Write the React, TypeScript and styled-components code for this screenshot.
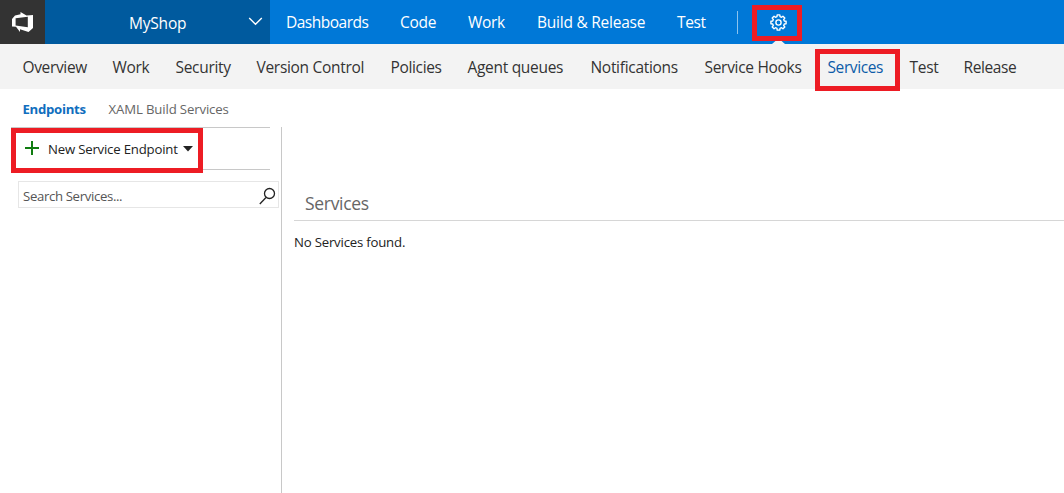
import React from 'react';
import styled, { createGlobalStyle } from 'styled-components';

const GlobalStyle = createGlobalStyle`
  *, *::before, *::after { box-sizing: border-box; }
  body {
    margin: 0;
    background: #fff;
    font-family: "Open Sans", "Noto Sans", sans-serif;
    color: #222;
    overflow: hidden;
  }
`;

const Page = styled.div`
  display: flex;
  flex-direction: column;
  height: 493px;
  width: 1064px;
`;

const TopBar = styled.header`
  display: flex;
  flex: none;
  height: 44px;
  background: #0078d7;
  color: #fff;
`;

const LogoTile = styled.div`
  width: 45px;
  background: #333;
  padding: 11px 0 0 11px;
`;

const ProjectPicker = styled.div`
  display: flex;
  width: 225px;
  padding-left: 84px;
  background: #005a9e;
  line-height: 46px;
`;

const Chevron = styled.svg`
  margin: 15px 7px 0 auto;
`;

const TopNav = styled.nav`
  display: flex;
  padding-left: 16px;
  line-height: 45px;
`;

const SubNav = styled.nav`
  display: flex;
  flex: none;
  height: 45px;
  padding-left: 22.5px;
  background: #f3f3f3;
  color: #333;
  line-height: 47px;
`;

const Label = styled.span<{ $width: number; $size?: number; $track?: number; $gap?: number }>`
  flex: none;
  width: ${p => p.$width}px;
  margin-right: ${p => p.$gap ?? 0}px;
  font-size: ${p => p.$size ?? 15.5}px;
  letter-spacing: ${p => p.$track ?? -0.3}px;
  white-space: nowrap;
`;

const Current = styled.span`
  position: relative;
  color: #0c5ba8;
`;

const Divider = styled.div`
  width: 1px;
  height: 23px;
  margin: 11px 14px 0 0;
  background: #8cc3ee;
`;

const SettingsTab = styled.div`
  position: relative;
  width: 50px;
  padding: 14px 0 0 18px;
  line-height: 0;
`;

const Pointer = styled.svg`
  position: absolute;
  left: 20px;
  top: 40px;
`;

const Highlight = styled.div<{ $top: number; $left: number; $width: number; $height: number; $border?: number }>`
  position: absolute;
  top: ${p => p.$top}px;
  left: ${p => p.$left}px;
  width: ${p => p.$width}px;
  height: ${p => p.$height}px;
  border: ${p => p.$border ?? 5}px solid #ed1c24;
`;

const Tabs = styled.div`
  display: flex;
  flex: none;
  height: 38px;
  padding-left: 22.5px;
  line-height: 41px;
  color: #666;
`;

const ActiveTab = styled.span`
  color: #106ebe;
  font-weight: 700;
`;

const Body = styled.div`
  display: flex;
  flex: 1;
`;

const SidePanel = styled.aside`
  width: 282px;
  padding-left: 11px;
  border-right: 1px solid #c8c8c8;
`;

const Toolbar = styled.div`
  position: relative;
  display: flex;
  width: 259px;
  height: 43px;
  border: solid #c8c8c8;
  border-width: 1px 0;
  padding-left: 14px;
  line-height: 43px;
`;

const PlusIcon = styled.svg`
  margin: 13px 9px 0 0;
`;

const CaretIcon = styled.svg`
  margin-top: 18px;
`;

const SearchBox = styled.div`
  display: flex;
  justify-content: space-between;
  width: 261px;
  height: 27px;
  margin: 11px 0 0 7px;
  padding: 0 2px 0 4px;
  border: 1px solid #e6e6e6;
  line-height: 28px;
  color: #555;
`;

const Main = styled.main`
  flex: 1;
  padding: 60px 0 0 12px;
`;

const Heading = styled.h2`
  display: flex;
  height: 34px;
  margin: 0;
  padding-left: 11px;
  border-bottom: 1px solid #d6d6d6;
  font-weight: 400;
  line-height: 32px;
  color: #666;
`;

const Message = styled.p`
  display: flex;
  margin: 0;
  line-height: 43px;
  color: #222;
`;

type Item = { text: string; width: number; gap: number; track?: number };

const topItems: Item[] = [
  { text: 'Dashboards', width: 83, gap: 31, track: -0.5 },
  { text: 'Code', width: 37, gap: 31 },
  { text: 'Work', width: 38, gap: 31 },
  { text: 'Build & Release', width: 109, gap: 31, track: -0.24 },
  { text: 'Test', width: 29, gap: 31, track: -0.4 },
];

const subItems: Item[] = [
  { text: 'Overview', width: 64, gap: 26, track: -0.35 },
  { text: 'Work', width: 37, gap: 26 },
  { text: 'Security', width: 55, gap: 26 },
  { text: 'Version Control', width: 108, gap: 26 },
  { text: 'Policies', width: 51, gap: 26, track: -0.35 },
  { text: 'Agent queues', width: 97, gap: 26 },
  { text: 'Notifications', width: 88, gap: 26 },
  { text: 'Service Hooks', width: 97, gap: 26 },
  { text: 'Services', width: 56, gap: 26, track: -0.4 },
  { text: 'Test', width: 28, gap: 26 },
  { text: 'Release', width: 52, gap: 0, track: -0.4 },
];

const gearPath = (() => {
  const points: string[] = [];
  for (let i = 0; i < 8; i++) {
    const a = (i * Math.PI) / 4;
    [[-0.26, 6], [-0.17, 7.7], [0.17, 7.7], [0.26, 6]].forEach(([d, r]) => {
      points.push(`${(8.5 + r * Math.cos(a + d)).toFixed(2)} ${(8.5 + r * Math.sin(a + d)).toFixed(2)}`);
    });
  }
  return `M${points.join('L')}Z`;
})();

export default function App() {
  return (
    <Page>
      <GlobalStyle />
      <TopBar>
        <LogoTile>
          <svg width="23" height="22" viewBox="0 0 23 22">
            <path fill="#fff" fillRule="evenodd" d="M1 8L4 4.6L9.5 3.3V1L15.5 4.4L22 4V17L17.5 21L9 18.2V21L5 15.8L1 15.5ZM4.6 7.2V14.6L16.8 16.2V5.8Z" />
          </svg>
        </LogoTile>
        <ProjectPicker>
          <Label $width={58} $track={-0.2}>MyShop</Label>
          <Chevron width="15" height="12" viewBox="0 0 15 12" fill="none" stroke="#fff" strokeWidth="1.4">
            <path d="M1.2 3L7.5 9.3L13.8 3" />
          </Chevron>
        </ProjectPicker>
        <TopNav>
          {topItems.map(i => (
            <Label key={i.text} $width={i.width} $gap={i.gap} $track={i.track}>{i.text}</Label>
          ))}
        </TopNav>
        <Divider />
        <SettingsTab>
          <svg width="17" height="17" viewBox="0 0 17 17" fill="none" stroke="#fff" strokeWidth="1.4" strokeLinejoin="round">
            <path d={gearPath} />
            <circle cx="8.5" cy="8.5" r="2.6" />
          </svg>
          <Highlight $top={5} $left={0} $width={50} $height={36} />
          <Pointer width="13" height="4" viewBox="0 0 13 4"><path fill="#f3f3f3" d="M0 4L3.5 1H9.5L13 4Z" /></Pointer>
        </SettingsTab>
      </TopBar>
      <SubNav>
        {subItems.map(i => (
          <Label key={i.text} $width={i.width} $gap={i.gap} $track={i.track}>
            {i.text === 'Services' ? (
              <Current>
                {i.text}
                <Highlight $top={-7} $left={-12.5} $width={85} $height={42} />
              </Current>
            ) : i.text}
          </Label>
        ))}
      </SubNav>
      <Tabs>
        <Label $width={64} $gap={22} $size={13.2} $track={-0.3}><ActiveTab>Endpoints</ActiveTab></Label>
        <Label $width={121} $size={13.2} $track={-0.14}>XAML Build Services</Label>
      </Tabs>
      <Body>
        <SidePanel>
          <Toolbar>
            <PlusIcon width="14" height="14" viewBox="0 0 14 14" stroke="#107c10" strokeWidth="2">
              <path d="M0 7H14M7 0V14" />
            </PlusIcon>
            <Label $width={130} $gap={5} $size={13.2} $track={-0.2}>New Service Endpoint</Label>
            <CaretIcon width="10" height="6" viewBox="0 0 10 6"><path fill="#222" d="M0 0H10L5 5.5Z" /></CaretIcon>
            <Highlight $top={0} $left={0} $width={192} $height={45} />
          </Toolbar>
          <SearchBox>
            <Label $width={101} $size={13.2} $track={-0.35}>Search Services...</Label>
            <svg width="17" height="24" viewBox="0 0 17 24" fill="none" stroke="#222" strokeWidth="1.3">
              <circle cx="10.5" cy="11.5" r="5" />
              <path d="M7 15.5L0.8 22" />
            </svg>
          </SearchBox>
        </SidePanel>
        <Main>
          <Heading><Label $width={64} $size={17.5}>Services</Label></Heading>
          <Message><Label $width={112} $size={13.2} $track={-0.2}>No Services found.</Label></Message>
        </Main>
      </Body>
    </Page>
  );
}
